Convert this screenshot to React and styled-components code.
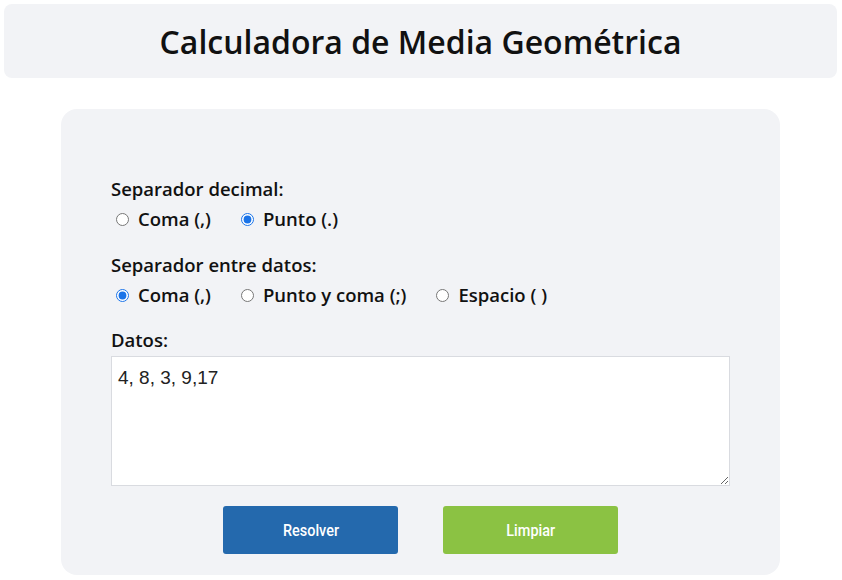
import React, { useState } from "react";
import styled, { createGlobalStyle } from "styled-components";

const Global = createGlobalStyle`
  html, body { margin: 0; padding: 0; background: #ffffff; }
  body { font-family: "Open Sans", "Noto Sans", sans-serif; color: #111; }
  * { box-sizing: border-box; }
`;

const Page = styled.div`
  padding: 4px 5px 0 4px;
  display: flex;
  flex-direction: column;
  align-items: center;
`;

const Header = styled.header`
  width: 100%;
  height: 74px;
  background: #f2f3f6;
  border-radius: 8px;
  display: flex;
  align-items: center;
  justify-content: center;
`;

const Title = styled.h1`
  margin: 0;
  font-size: 32px;
  font-weight: 600;
  color: #111;
`;

const Card = styled.main`
  margin-top: 31px;
  width: 719px;
  background: #f2f3f6;
  border-radius: 16px;
  padding: 67px 50px 21px 50px;
  display: flex;
  flex-direction: column;
`;

const Group = styled.div`
  display: flex;
  flex-direction: column;
  margin-bottom: ${(p) => p.$mb || 0}px;
`;

const Label = styled.div`
  font-size: 18.5px;
  font-weight: 560;
  line-height: 26px;
  color: #111;
`;

const Options = styled.div`
  display: flex;
  gap: 30px;
  margin-top: 4px;
  padding-left: 5px;
`;

const Option = styled.label`
  display: flex;
  align-items: center;
  font-size: 18.5px;
  font-weight: 560;
  line-height: 26px;
  color: #111;
  cursor: pointer;
`;

const Radio = styled.input.attrs({ type: "radio" })`
  margin: 0 9px 0 0;
  width: 13px;
  height: 13px;
  accent-color: #1a73e8;
`;

const TextArea = styled.textarea`
  margin-top: 3px;
  width: 100%;
  height: 130px;
  border: 1px solid #d9dbe0;
  background: #fff;
  padding: 10px 6px;
  font-family: "Liberation Sans", Arial, sans-serif;
  font-size: 19px;
  line-height: 22px;
  color: #222;
  resize: vertical;
  outline: none;
`;

const Buttons = styled.div`
  display: flex;
  justify-content: center;
  gap: 45px;
  margin-top: 20px;
`;

const Button = styled.button`
  width: 175px;
  height: 48px;
  border: none;
  border-radius: 3px;
  background: ${(p) => p.$bg};
  color: #fff;
  font-family: Roboto, "Liberation Sans", sans-serif;
  font-size: 17px;
  font-weight: 500;
  cursor: pointer;
  display: flex;
  align-items: center;
  justify-content: center;
`;

const ButtonText = styled.span`
  display: inline-block;
  transform: scaleX(0.85);
`;

export default function App() {
  const [dec, setDec] = useState("punto");
  const [sep, setSep] = useState("coma");
  const [data, setData] = useState("4, 8, 3, 9,17");
  return (
    <>
      <Global />
      <Page>
        <Header>
          <Title>Calculadora de Media Geométrica</Title>
        </Header>
        <Card>
          <Group $mb={20}>
            <Label>Separador decimal:</Label>
            <Options>
              <Option>
                <Radio name="dec" checked={dec === "coma"} onChange={() => setDec("coma")} />
                Coma (,)
              </Option>
              <Option>
                <Radio name="dec" checked={dec === "punto"} onChange={() => setDec("punto")} />
                Punto (.)
              </Option>
            </Options>
          </Group>
          <Group $mb={19}>
            <Label>Separador entre datos:</Label>
            <Options>
              <Option>
                <Radio name="sep" checked={sep === "coma"} onChange={() => setSep("coma")} />
                Coma (,)
              </Option>
              <Option>
                <Radio name="sep" checked={sep === "pc"} onChange={() => setSep("pc")} />
                Punto y coma (;)
              </Option>
              <Option>
                <Radio name="sep" checked={sep === "esp"} onChange={() => setSep("esp")} />
                Espacio ( )
              </Option>
            </Options>
          </Group>
          <Group>
            <Label>Datos:</Label>
            <TextArea value={data} onChange={(e) => setData(e.target.value)} />
          </Group>
          <Buttons>
            <Button $bg="#2469ad"><ButtonText>Resolver</ButtonText></Button>
            <Button $bg="#8bc243"><ButtonText>Limpiar</ButtonText></Button>
          </Buttons>
        </Card>
      </Page>
    </>
  );
}
